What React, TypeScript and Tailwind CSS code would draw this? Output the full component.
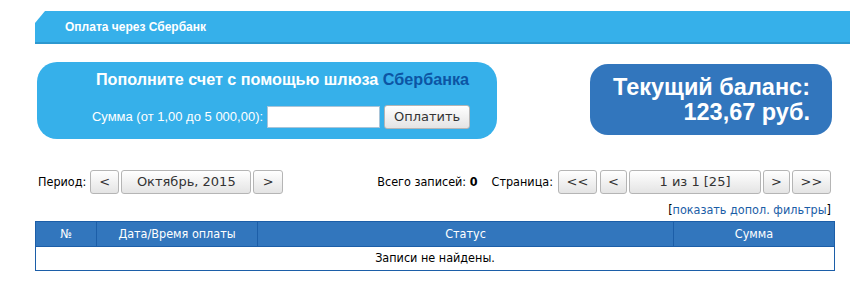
import React from 'react';

const btn =
  'h-[24px] rounded-[3px] border border-[#b5b5b5] bg-gradient-to-b from-white to-[#e4e4e4] font-["DejaVu_Sans",sans-serif] [font-stretch:normal] text-[13px] text-[#333] flex items-center justify-center';

const App: React.FC = () => {
  return (
    <div className="w-[850px] h-[305px] bg-white overflow-hidden font-['DejaVu_Sans_Condensed','DejaVu_Sans',sans-serif] [font-stretch:condensed] text-[12.5px] text-black">
      {/* Header bar */}
      <div className="mt-[11px] ml-[35px] h-[33px] bg-[#36b0ea] border-b-2 border-[#2d98cf] flex items-center [clip-path:polygon(10px_0,100%_0,100%_100%,0_100%,0_12px)]">
        <span className="pl-[30px] font-['Liberation_Sans',sans-serif] [font-stretch:normal] font-bold text-[12px] text-white">Оплата через Сбербанк</span>
      </div>

      <div className="w-[800px] ml-[35px]">
        {/* Panels */}
        <div className="mt-[18px] flex justify-between items-start">
          <div className="ml-[2px] w-[460px] h-[77px] rounded-[20px] bg-[#36b0ea] flex flex-col items-center pt-[7px] font-['Liberation_Sans',sans-serif] [font-stretch:normal]">
            <div className="font-bold text-[16.2px] text-white leading-[20px] ml-[31px]">
              Пополните счет с помощью шлюза <span className="text-[#0c55a4]">Сбербанка</span>
            </div>
            <div className="mt-[16px] flex items-center gap-[4px] ml-[28px]">
              <span className="text-[13px] text-white">Сумма (от 1,00 до 5 000,00):</span>
              <input className="w-[113px] h-[22px] bg-white border border-[#a9c4d8] outline-none" />
              <button className={`${btn} w-[86px]`}>Оплатить</button>
            </div>
          </div>
          <div className="mt-[2px] mr-[3px] w-[242px] h-[71px] rounded-[18px] bg-[#3276bd] flex flex-col items-end justify-center pr-[22px] font-['Liberation_Sans',sans-serif] [font-stretch:normal] font-bold text-[23.5px] leading-[25px] text-white">
            <div>Текущий баланс:</div>
            <div>123,67 руб.</div>
          </div>
        </div>

        {/* Period / pagination */}
        <div className="mt-[31px] flex items-center justify-between">
          <div className="flex items-center ml-[3px]">
            <span className="mr-[4px]">Период:</span>
            <button className={`${btn} w-[29px]`}>&lt;</button>
            <button className={`${btn} w-[130px] ml-[2px]`}>Октябрь, 2015</button>
            <button className={`${btn} w-[30px] ml-[2px]`}>&gt;</button>
          </div>
          <div className="flex items-center mr-[4px]">
            <span>Всего записей: <b>0</b></span>
            <span className="ml-[14px] mr-[5px]">Страница:</span>
            <button className={`${btn} w-[39px]`}>&lt;&lt;</button>
            <button className={`${btn} w-[27px] ml-[3px]`}>&lt;</button>
            <button className={`${btn} w-[132px] ml-[2px]`}>1 из 1 [25]</button>
            <button className={`${btn} w-[27px] ml-[2px]`}>&gt;</button>
            <button className={`${btn} w-[39px] ml-[2px]`}>&gt;&gt;</button>
          </div>
        </div>

        <div className="mt-[8px] text-right pr-[4px] leading-[16px]">
          [<span className="text-[#1a5da6]">показать допол. фильтры</span>]
        </div>

        {/* Table */}
        <table className="mt-[3px] w-[800px] border-collapse border border-[#1c5ea8]">
          <thead>
            <tr className="bg-[#3276bd] text-white h-[25px]">
              <th className="w-[61px] font-normal border border-[#1c5ea8]">№</th>
              <th className="w-[161px] font-normal border border-[#1c5ea8]">Дата/Время оплаты</th>
              <th className="w-[416px] font-normal border border-[#1c5ea8]">Статус</th>
              <th className="font-normal border border-[#1c5ea8]">Сумма</th>
            </tr>
          </thead>
          <tbody>
            <tr className="h-[24px]">
              <td colSpan={4} className="text-center">Записи не найдены.</td>
            </tr>
          </tbody>
        </table>
      </div>
    </div>
  );
};

export default App;
